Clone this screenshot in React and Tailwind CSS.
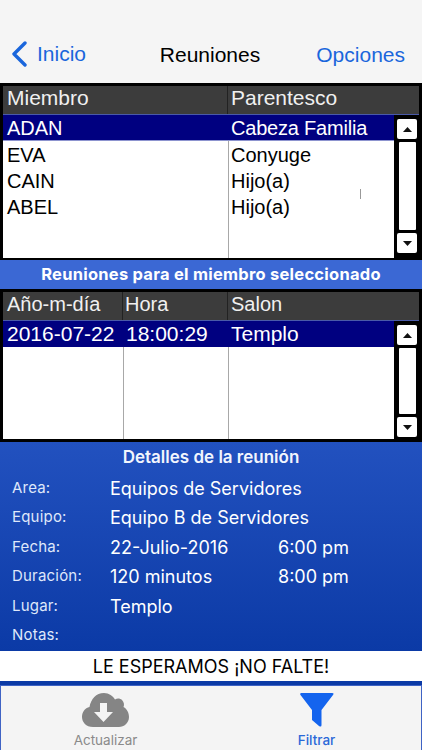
import React from 'react';

const helv = '[font-family:"Liberation_Sans",Arial,sans-serif]';

function ScrollBar({ bottom }) {
  return (
    <div className={`w-[28px] shrink-0 bg-black flex flex-col items-start pl-[3px] pt-[4px] gap-[3px] ${bottom}`}>
      <div className="w-[20px] h-[20px] shrink-0 bg-white rounded-[2px] flex items-center justify-center">
        <svg width="9" height="5" viewBox="0 0 9 5"><path d="M0 5 L4.500 0 L9 5 Z" fill="#111" /></svg>
      </div>
      <div className="w-[17px] ml-[2px] flex-1 bg-white rounded-[1px]" />
      <div className="w-[20px] h-[20px] shrink-0 bg-white rounded-[2px] flex items-center justify-center">
        <svg width="9" height="5" viewBox="0 0 9 5"><path d="M0 0 L4.500 5 L9 0 Z" fill="#111" /></svg>
      </div>
    </div>
  );
}

function MemberRow({ name, rel }) {
  return (
    <div className="flex h-[26px] items-center text-[20px] text-black">
      <div className="w-[225px] pl-[4px]">{name}</div>
      <div className="pl-[3px]">{rel}</div>
    </div>
  );
}

function DetailRow({ label, value, time }) {
  return (
    <div className="flex h-[29.4px] items-start whitespace-nowrap">
      <div className="w-[110px] pl-[12px] text-[15px] leading-[28px] tracking-[0.2px] text-[#dfe7fa]">{label}</div>
      <div className="w-[168px] text-[18px] leading-[29px]">{value}</div>
      <div className="text-[18px] leading-[29px]">{time}</div>
    </div>
  );
}

export default function App() {
  return (
    <div className={`w-[422px] h-[750px] overflow-hidden flex flex-col bg-black ${helv}`}>
      {/* barra de navegacion */}
      <nav className="h-[83px] shrink-0 bg-[#f5f5f5] flex items-end justify-between pb-[15px] pl-[11px] pr-[17px] text-[21px] leading-[26px]">
        <div className="flex items-center text-[#1a66dc] w-[134px]">
          <svg width="16" height="28" viewBox="0 0 16 28" className="mr-[10px]">
            <path d="M14 3 L3 14 L14 25" fill="none" stroke="#1a66dc" strokeWidth="3.4" strokeLinecap="round" strokeLinejoin="round" />
          </svg>
          <span>Inicio</span>
        </div>
        <span className="text-black">Reuniones</span>
        <span className="text-[#1a66dc] w-[130px] text-right">Opciones</span>
      </nav>

      {/* tabla de miembros */}
      <section className="h-[177px] shrink-0 bg-black pt-[3px] px-[3px] pb-[2px] flex flex-col">
        <div className="h-[29px] shrink-0 bg-[#3c3c3c] flex text-[21px] text-[#f0f0f0] border-b border-[#4a5aa8]">
          <div className="w-[225px] h-full pl-[4px] pb-[4px] flex items-center border-r border-[#222]">Miembro</div>
          <div className="pl-[3px] pb-[4px] flex items-center">Parentesco</div>
        </div>
        <div className="flex flex-1 min-h-0 -mr-[3px]">
          <div className="relative flex-1 bg-white">
            <div className="absolute left-[225px] top-0 bottom-0 w-px bg-[#a8a8a8]" />
            <div className="absolute left-[357px] top-[74px] h-[10px] w-px bg-[#999]" />
            <div className="relative flex h-[26px] items-center text-[20px] text-white bg-[#000080] border-b border-[#8d94cf]">
              <div className="w-[225px] pl-[4px]">ADAN</div>
              <div className="pl-[3px] tracking-[-0.2px]">Cabeza Familia</div>
            </div>
            <div className="relative pt-[1px]">
              <MemberRow name="EVA" rel="Conyuge" />
              <MemberRow name="CAIN" rel="Hijo(a)" />
              <MemberRow name="ABEL" rel="Hijo(a)" />
            </div>
          </div>
          <ScrollBar bottom="pb-[5px]" />
        </div>
      </section>

      <div className="h-[29px] shrink-0 bg-[#3b68d4] flex items-center justify-center text-white font-bold tracking-[0.25px] [font-family:Inter,sans-serif]">
        <span className="text-[16.5px]">Reuniones para el miembro seleccionado</span>
      </div>

      {/* tabla de reuniones */}
      <section className="h-[153px] shrink-0 bg-black pt-[3px] px-[3px] pb-[3px] flex flex-col">
        <div className="h-[29px] shrink-0 bg-[#3c3c3c] flex text-[20px] text-[#f0f0f0] border-b border-[#4a5aa8]">
          <div className="w-[120px] h-full pl-[4px] pb-[4px] flex items-center border-r border-[#222]">Año-m-día</div>
          <div className="w-[105px] h-full pl-[2px] pb-[4px] flex items-center border-r border-[#222]">Hora</div>
          <div className="pl-[3px] pb-[4px] flex items-center">Salon</div>
        </div>
        <div className="flex flex-1 min-h-0 -mr-[3px]">
          <div className="relative flex-1 bg-white">
            <div className="absolute left-[120px] top-0 bottom-0 w-px bg-[#a8a8a8]" />
            <div className="absolute left-[225px] top-0 bottom-0 w-px bg-[#a8a8a8]" />
            <div className="relative flex h-[26px] items-center text-[21px] text-white bg-[#000080]">
              <div className="w-[120px] pl-[4px] whitespace-nowrap">2016-07-22</div>
              <div className="w-[105px] pl-[3px]">18:00:29</div>
              <div className="pl-[3px]">Templo</div>
            </div>
          </div>
          <ScrollBar bottom="pb-[2px]" />
        </div>
      </section>

      {/* detalles */}
      <section className="h-[209px] shrink-0 bg-gradient-to-b from-[#2251bf] to-[#0b3aa6] text-white [font-family:Inter,sans-serif]">
        <div className="h-[32px] flex items-center justify-center font-semibold text-[17px] text-[#f2f5fd]">Detalles de la reunión</div>
        <DetailRow label="Area:" value="Equipos de Servidores" />
        <DetailRow label="Equipo:" value="Equipo B de Servidores" />
        <DetailRow label="Fecha:" value="22-Julio-2016" time="6:00 pm" />
        <DetailRow label="Duración:" value="120 minutos" time="8:00 pm" />
        <DetailRow label="Lugar:" value="Templo" />
        <DetailRow label="Notas:" />
      </section>

      <div className="h-[30px] shrink-0 bg-white flex items-center justify-center text-[18px] text-black [font-family:Inter,sans-serif]">
        LE ESPERAMOS ¡NO FALTE!
      </div>

      <div className="h-[4px] shrink-0 bg-[#0b3aa6]" />

      {/* barra de pestanas */}
      <footer className="h-[65px] shrink-0 bg-[#f4f4f4] border-x border-t border-[#3f63c4] flex [font-family:Inter,sans-serif]">
        <div className="flex-1 flex flex-col items-center pt-[7px]">
          <svg width="47" height="34" viewBox="0 0 47 34">
            <path d="M11 34 C4 34 0 29 0 24 C0 19 3 15 7.500 14 C9 6 14 0 22 0 C27 0 31 3 33 6.500 C35 5 38 5 40 7 C42 9 42.500 12 41.500 14 C45 16 47 20 47 24 C47 30 42 34 37 34 Z" fill="#858585" />
            <path d="M18 10 H25 V19 H31 L21.500 29 L12 19 H18 Z" fill="#f4f4f4" />
          </svg>
          <span className="text-[13.5px] leading-[16px] mt-[5px] text-[#8a8a8a]">Actualizar</span>
        </div>
        <div className="flex-1 flex flex-col items-center pt-[7px] pl-[2px]">
          <svg width="34" height="34" viewBox="0 0 34 34">
            <path d="M1.500 0 H32 Q34.500 0 33 2 L21.500 17 V32 Q21.500 34.500 19 33 L12 27 V17 L0.500 2 Q-0.500 0 1.500 0 Z" fill="#1464ee" />
          </svg>
          <span className="text-[13.5px] leading-[16px] mt-[5px] font-medium text-[#2a68d8]">Filtrar</span>
        </div>
      </footer>
    </div>
  );
}
